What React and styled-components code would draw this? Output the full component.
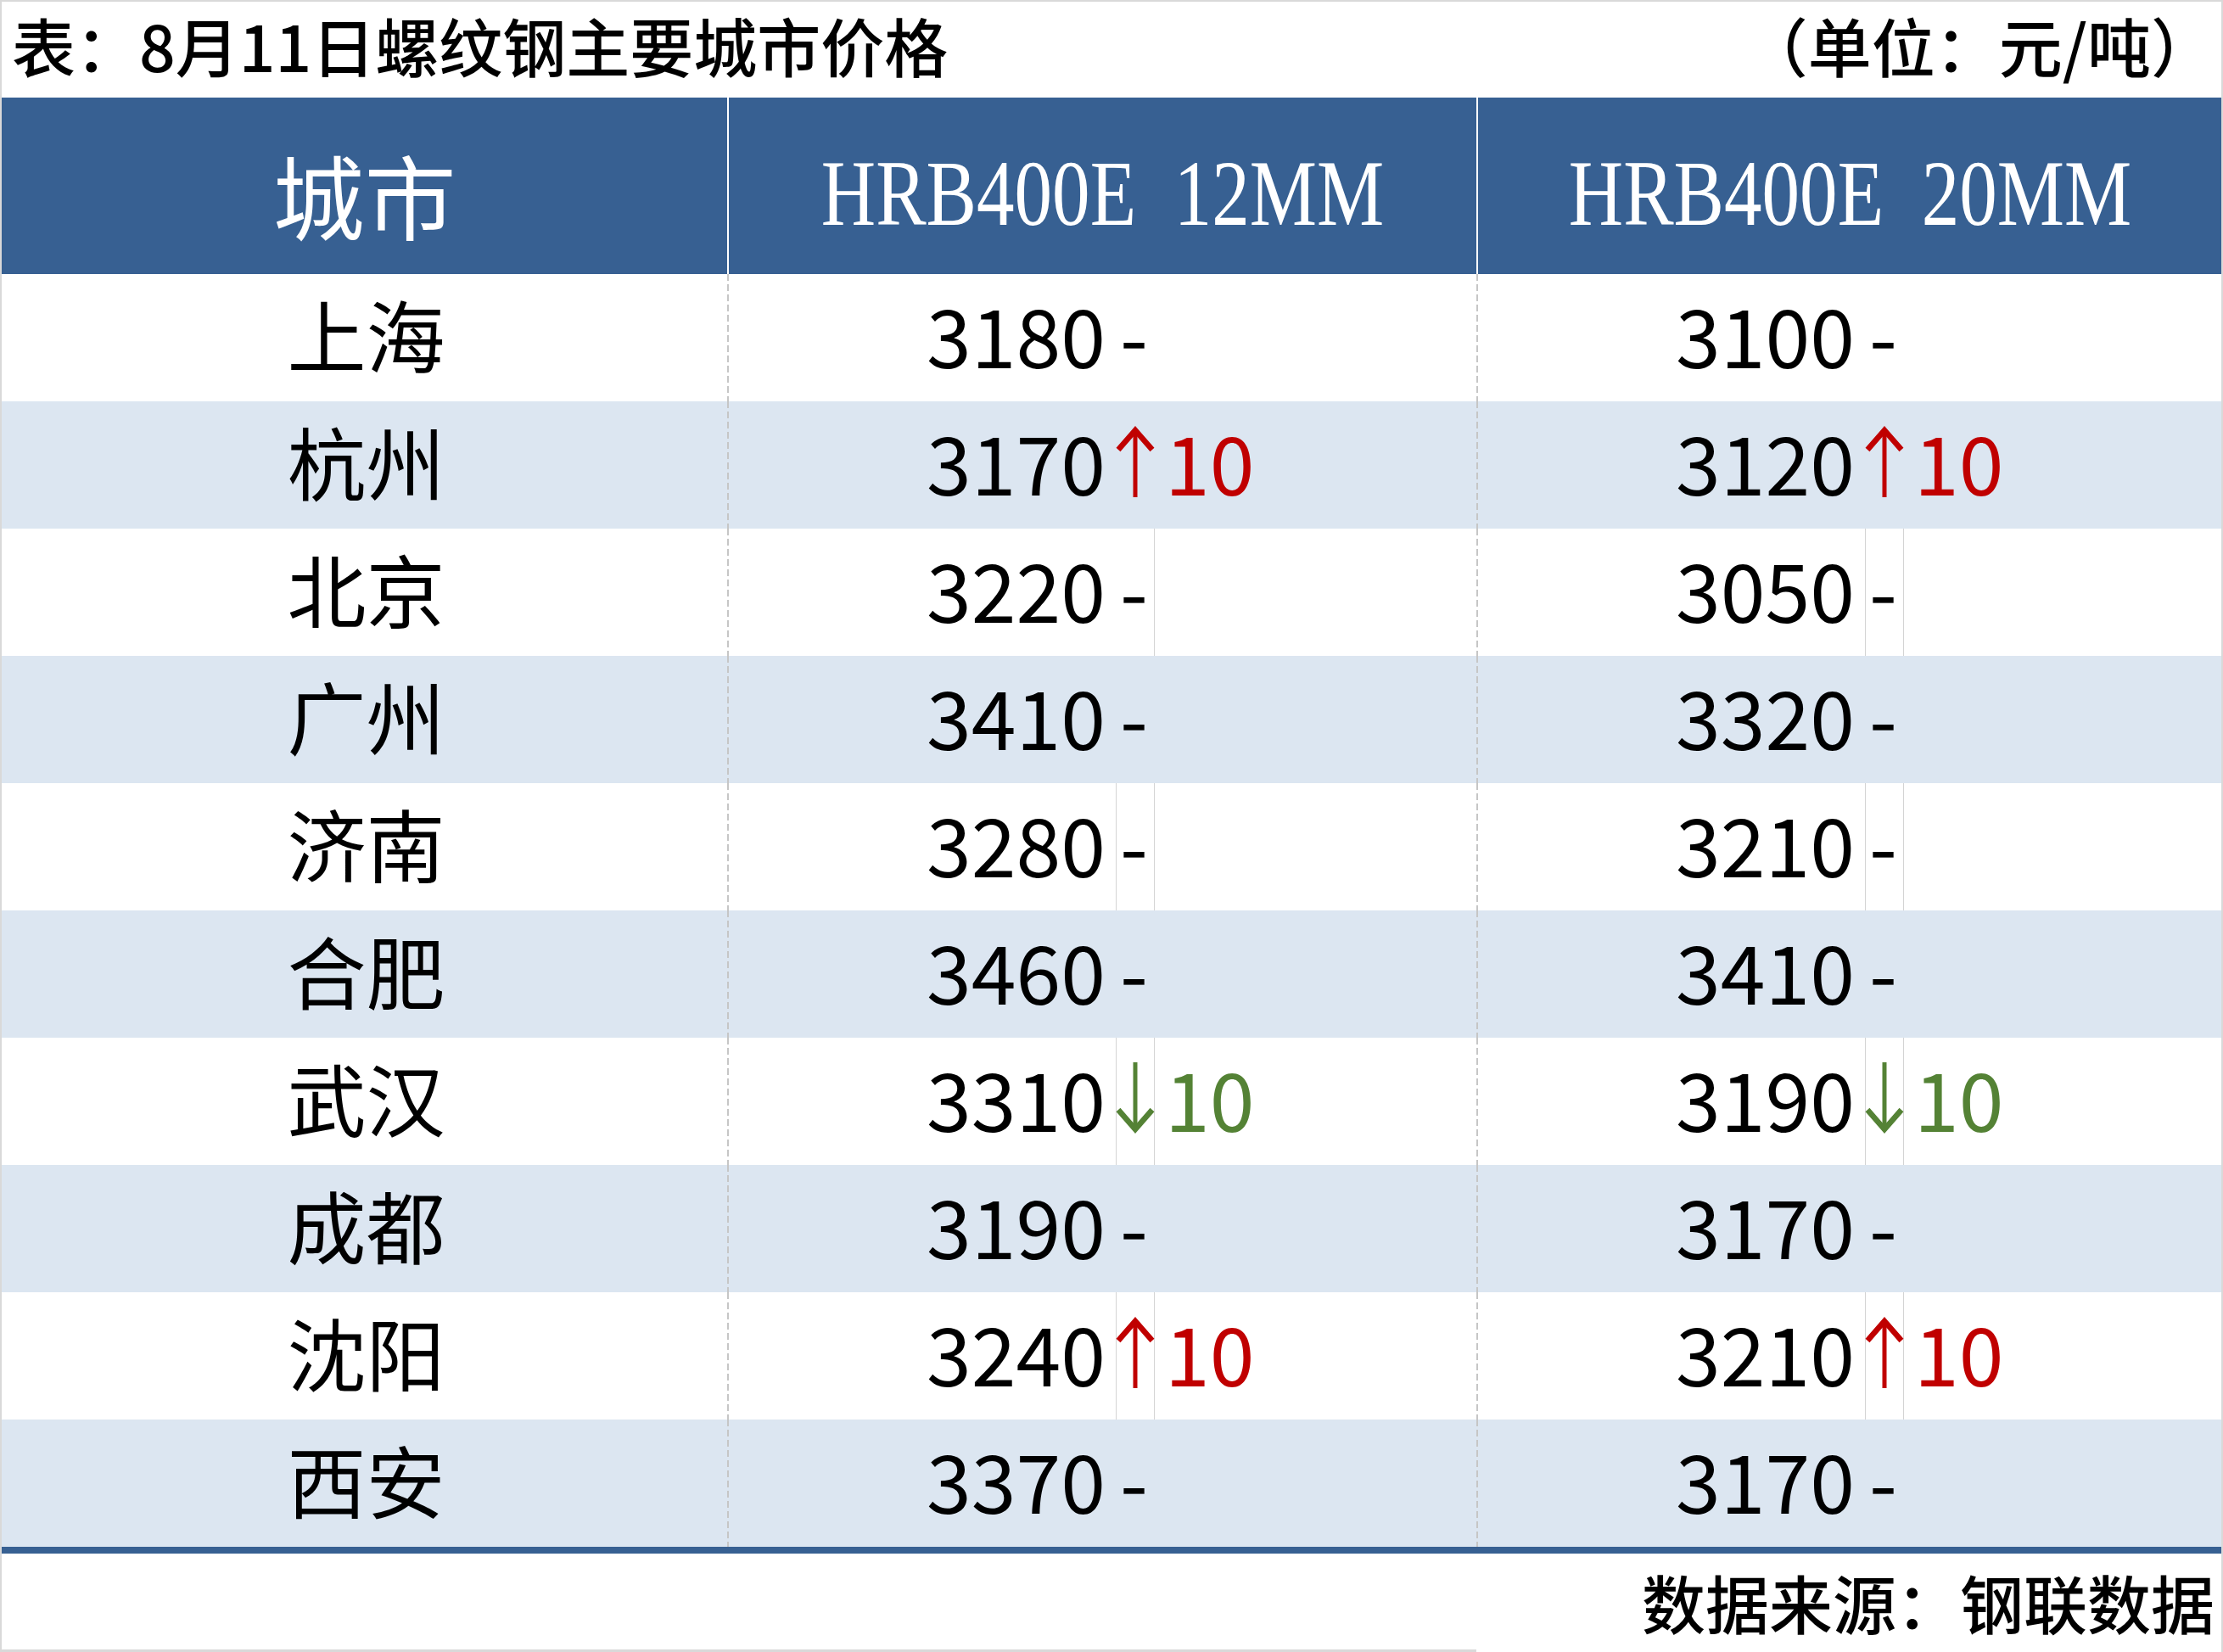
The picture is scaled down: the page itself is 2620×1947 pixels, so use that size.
import React from 'react';
import styled, { createGlobalStyle } from 'styled-components';

const GlobalStyle = createGlobalStyle`
  html, body {
    margin: 0;
    padding: 0;
    background: #fff;
  }
  body {
    font-family: "Noto Sans CJK SC", "Noto Sans", sans-serif;
    color: #000;
  }
`;

const BLUE = '#376092';
const SHADE = '#dce6f1';
const RED = '#c00000';
const GREEN = '#548235';

const Sheet = styled.div`
  width: 2620px;
  box-sizing: border-box;
  border: 2px solid #d9d9d9;
  border-bottom: none;
  background: #fff;
`;

const TitleBar = styled.div`
  height: 113px;
  box-sizing: border-box;
  display: flex;
  align-items: center;
  justify-content: space-between;
  padding: 0 8px 12px 12px;
  font-size: 75px;
  font-weight: 500;
  line-height: 1;
`;

const HeaderRow = styled.div`
  display: grid;
  grid-template-columns: 855px 883px 1fr;
  height: 208px;
  background: ${BLUE};
  color: #fff;
`;

const HeadCell = styled.div`
  display: flex;
  align-items: center;
  justify-content: center;
  padding-top: 18px;
  border-left: ${(p) => (p.$divider ? '2px solid #fff' : 'none')};
`;

const CityHead = styled.span`
  font-size: 108px;
  line-height: 1;
  font-weight: 400;
`;

const SpecHead = styled.span`
  display: inline-block;
  font-family: "Liberation Serif", "Times New Roman", serif;
  font-size: 110px;
  line-height: 1;
  white-space: pre;
  transform: scaleX(0.81);
`;

const BodyRow = styled.div`
  display: grid;
  grid-template-columns: 855px 883px 1fr;
  height: 150px;
  background-color: ${(p) => (p.$shade ? SHADE : '#fff')};
`;

const CityCell = styled.div`
  display: flex;
  align-items: center;
  justify-content: center;
  font-size: 93px;
  line-height: 1;
  padding: 0 0 12px 4px;
`;

const PriceCell = styled.div`
  display: grid;
  grid-template-columns: 458px 46px 1fr;
  background-image: repeating-linear-gradient(
    to bottom,
    #c6c6c6 0,
    #c6c6c6 8px,
    transparent 8px,
    transparent 12px
  );
  background-size: 2px 100%;
  background-repeat: no-repeat;
  background-position: left top;
`;

const Num = styled.div`
  display: flex;
  align-items: center;
  justify-content: flex-end;
  padding: 0 12px 12px 0;
  font-size: 95px;
  line-height: 1;
`;

const Mark = styled.div`
  display: flex;
  align-items: center;
  justify-content: ${(p) => (p.$dash ? 'flex-start' : 'center')};
  padding: ${(p) => (p.$dash ? '0 0 12px 5px' : '0 0 6px 0')};
  font-size: 95px;
  line-height: 1;
  box-shadow: ${(p) =>
    [p.$left && 'inset 1px 0 0 #d4d4d4', p.$right && 'inset -1px 0 0 #d4d4d4']
      .filter(Boolean)
      .join(', ') || 'none'};
`;

const Delta = styled.div`
  display: flex;
  align-items: center;
  padding: 0 0 12px 12px;
  font-size: 95px;
  line-height: 1;
  color: ${(p) => (p.$dir === 'up' ? RED : GREEN)};
`;

const BottomRule = styled.div`
  height: 8px;
  background: ${BLUE};
`;

const Footer = styled.div`
  height: 116px;
  box-sizing: border-box;
  display: flex;
  align-items: center;
  justify-content: flex-end;
  padding: 0 8px 4px 0;
  font-size: 75px;
  font-weight: 500;
  line-height: 1;
  background-image: linear-gradient(#d9d9d9, #d9d9d9);
  background-size: 1738px 3px;
  background-position: left bottom;
  background-repeat: no-repeat;
`;

const Arrow = ({ dir }) => {
  const color = dir === 'up' ? RED : GREEN;
  return (
    <svg width="46" height="90" viewBox="0 0 46 90">
      {dir === 'up' ? (
        <g fill="none" stroke={color} strokeLinejoin="miter" strokeMiterlimit="10">
          <path d="M23 6 V86" strokeWidth="5" />
          <path d="M3 30 L23 7 L43 30" strokeWidth="6.5" />
        </g>
      ) : (
        <g fill="none" stroke={color} strokeLinejoin="miter" strokeMiterlimit="10">
          <path d="M23 2 V82" strokeWidth="5" />
          <path d="M3 58 L23 81 L43 58" strokeWidth="6.5" />
        </g>
      )}
    </svg>
  );
};

const rows = [
  { city: '上海', a: { price: 3180 }, b: { price: 3100 }, grid: [[0, 0], [0, 0]] },
  { city: '杭州', a: { price: 3170, dir: 'up', delta: 10 }, b: { price: 3120, dir: 'up', delta: 10 } },
  { city: '北京', a: { price: 3220 }, b: { price: 3050 }, grid: [[0, 1], [1, 1]] },
  { city: '广州', a: { price: 3410 }, b: { price: 3320 } },
  { city: '济南', a: { price: 3280 }, b: { price: 3210 }, grid: [[1, 1], [1, 1]] },
  { city: '合肥', a: { price: 3460 }, b: { price: 3410 } },
  { city: '武汉', a: { price: 3310, dir: 'down', delta: 10 }, b: { price: 3190, dir: 'down', delta: 10 }, grid: [[1, 1], [1, 1]] },
  { city: '成都', a: { price: 3190 }, b: { price: 3170 } },
  { city: '沈阳', a: { price: 3240, dir: 'up', delta: 10 }, b: { price: 3210, dir: 'up', delta: 10 }, grid: [[1, 1], [1, 1]] },
  { city: '西安', a: { price: 3370 }, b: { price: 3170 } },
];

const Price = ({ item, grid = [0, 0] }) => (
  <PriceCell>
    <Num>{item.price}</Num>
    <Mark $dash={!item.dir} $left={grid[0]} $right={grid[1]}>
      {item.dir ? <Arrow dir={item.dir} /> : '-'}
    </Mark>
    {item.dir ? <Delta $dir={item.dir}>{item.delta}</Delta> : <div />}
  </PriceCell>
);

const App = () => (
  <>
    <GlobalStyle />
    <Sheet>
      <TitleBar>
        <span>表：8月11日螺纹钢主要城市价格</span>
        <span>（单位：元/吨）</span>
      </TitleBar>
      <HeaderRow>
        <HeadCell>
          <CityHead>城市</CityHead>
        </HeadCell>
        <HeadCell $divider>
          <SpecHead>HRB400E  12MM</SpecHead>
        </HeadCell>
        <HeadCell $divider>
          <SpecHead>HRB400E  20MM</SpecHead>
        </HeadCell>
      </HeaderRow>
      {rows.map((row, i) => {
        const grid = row.grid || [[0, 0], [0, 0]];
        return (
          <BodyRow key={row.city} $shade={i % 2 === 1}>
            <CityCell>{row.city}</CityCell>
            <Price item={row.a} grid={grid[0]} />
            <Price item={row.b} grid={grid[1]} />
          </BodyRow>
        );
      })}
      <BottomRule />
      <Footer>数据来源：钢联数据</Footer>
    </Sheet>
  </>
);

export default App;
